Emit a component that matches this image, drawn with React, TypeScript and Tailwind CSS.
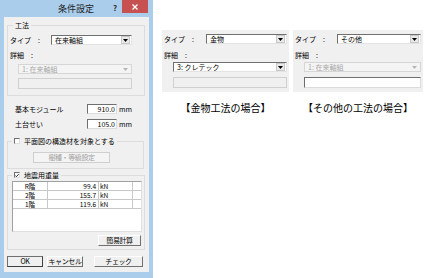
import React from "react";

const font = { fontFamily: '"Noto Sans CJK JP", "Noto Sans", sans-serif' };

function Arrow({ disabled }: { disabled?: boolean }) {
  return (
    <div
      className={`w-[9px] h-[8px] mr-[1px] flex items-center justify-center ${
        disabled ? "bg-[#f4f4f4]" : "bg-[#e9e9e9] border border-[#c8c8c8]"
      }`}
    >
      <svg width="5" height="3" viewBox="0 0 5 3">
        <path d="M0 0h5L2.5 3z" fill={disabled ? "#b5b5b5" : "#000"} />
      </svg>
    </div>
  );
}

function Select({
  value,
  width,
  disabled,
}: {
  value: string;
  width: string;
  disabled?: boolean;
}) {
  return (
    <div
      className={`${width} h-[10px] flex items-center justify-between border ${
        disabled
          ? "border-[#d6d6d6] bg-[#f4f4f4] text-[#a8a8a8]"
          : "border-t-[#6f6f6f] border-l-[#6f6f6f] border-r-[#e3e3e3] border-b-[#e3e3e3] bg-white text-black"
      }`}
    >
      <span className="pl-[3px] text-[7px] leading-none whitespace-nowrap">{value}</span>
      <Arrow disabled={disabled} />
    </div>
  );
}

function TextBox({ width, disabled }: { width: string; disabled?: boolean }) {
  return (
    <div
      className={`${width} h-[11px] border ${
        disabled
          ? "border-[#d0d0d0] bg-[#f0f0f0]"
          : "border-t-[#6f6f6f] border-l-[#6f6f6f] border-r-[#dcdcdc] border-b-[#dcdcdc] bg-white"
      }`}
    />
  );
}

function Button({
  label,
  width,
  disabled,
  isDefault,
}: {
  label: string;
  width: string;
  disabled?: boolean;
  isDefault?: boolean;
}) {
  return (
    <div
      className={`${width} h-[11px] flex items-center justify-center text-[7px] leading-none whitespace-nowrap tracking-[-0.4px] border ${
        disabled
          ? "border-[#cfcfcf] bg-[#f4f4f4] text-[#a0a0a0]"
          : isDefault
          ? "border-[#707070] border-r-[#404040] border-b-[#404040] bg-[#f0f0f0] text-black"
          : "border-[#ffffff] border-r-[#707070] border-b-[#707070] bg-[#f0f0f0] text-black"
      }`}
    >
      {label}
    </div>
  );
}

function Check({ checked }: { checked?: boolean }) {
  return (
    <span className="inline-flex w-[6px] h-[6px] border border-[#6f6f6f] border-r-[#e0e0e0] border-b-[#e0e0e0] bg-white mr-[4px] items-center justify-center">
      {checked && (
        <svg width="5" height="5" viewBox="0 0 5 5">
          <path d="M0.5 2.5l1.3 1.5L4.5 0.8" stroke="#000" strokeWidth="1" fill="none" />
        </svg>
      )}
    </span>
  );
}

const rows = [
  { floor: "R階", value: "99.4" },
  { floor: "2階", value: "155.7" },
  { floor: "1階", value: "119.6" },
];

function Dialog() {
  return (
    <div className="w-[153px] h-[278px] shrink-0 bg-[#aacdec] flex flex-col">
      {/* title bar */}
      <div className="h-[17px] flex items-start">
        <div className="flex-1 pt-[4px] pl-[58px] text-[9px] leading-[10px] text-[#1e1e1e]">
          条件設定
        </div>
        <div className="pt-[3px] mr-[5px] text-[8px] leading-[9px] font-bold text-[#333]">?</div>
        <div className="w-[26px] h-[13px] mr-[5px] bg-[#c75050] flex items-center justify-center">
          <svg width="6" height="6" viewBox="0 0 6 6">
            <path d="M0.5 0.5l5 5M5.5 0.5l-5 5" stroke="#fff" strokeWidth="1.3" />
          </svg>
        </div>
      </div>

      {/* client area */}
      <div className="ml-[4px] w-[145px] h-[255px] bg-[#f0f0f0] pl-[3px] pr-[4px] pt-[4px] text-[7px] leading-[8px] text-black">
        <fieldset className="border border-[#dcdcdc] pl-[2px] pb-[6px]">
          <legend className="ml-[3px] px-[2px] text-[7px] leading-[8px]">工法</legend>
          <div className="flex items-center mt-[6px]">
            <span className="w-[41px]">タイプ　:</span>
            <Select value="在来軸組" width="w-[81px]" />
          </div>
          <div className="mt-[6px]">詳細　:</div>
          <div className="ml-[8px] mt-[5px] flex flex-col gap-[4px]">
            <Select value="1: 在来軸組" width="w-[114px]" disabled />
            <TextBox width="w-[114px]" disabled />
          </div>
        </fieldset>

        <div className="mt-[8px] flex items-center h-[10px]">
          <span className="pl-[8px] w-[80px]">基本モジュール</span>
          <div className="w-[30px] h-[10px] bg-white border border-t-[#6f6f6f] border-l-[#6f6f6f] border-r-[#dcdcdc] border-b-[#dcdcdc] text-right pr-[1px] leading-[8px]">
            910.0
          </div>
          <span className="ml-[2px]">mm</span>
        </div>
        <div className="mt-[5px] flex items-center h-[10px]">
          <span className="pl-[8px] w-[80px]">土台せい</span>
          <div className="w-[30px] h-[10px] bg-white border border-t-[#6f6f6f] border-l-[#6f6f6f] border-r-[#dcdcdc] border-b-[#dcdcdc] text-right pr-[1px] leading-[8px]">
            105.0
          </div>
          <span className="ml-[2px]">mm</span>
        </div>

        <fieldset className="mt-[8px] border border-[#dcdcdc] w-[137px] pb-[5px]">
          <legend className="ml-[4px] px-[2px] flex items-center text-[7px] leading-[8px]">
            <Check />
            平面図の構造材を対象とする
          </legend>
          <div className="mt-[7px] ml-[25px]">
            <Button label="樹種・等級設定" width="w-[77px]" disabled />
          </div>
        </fieldset>

        <fieldset className="mt-[2px] border border-[#dcdcdc] pb-[3px]">
          <legend className="ml-[4px] px-[2px] flex items-center text-[7px] leading-[8px]">
            <Check checked />
            地震用重量
          </legend>
          <div className="ml-[4px] mt-[2px] w-[130px] h-[51px] bg-white border border-[#a0a0a0] border-r-[#e0e0e0] border-b-[#e0e0e0]">
            {rows.map((r) => (
              <div key={r.floor} className="flex h-[9px] border-b border-[#c8c8c8] text-[6.5px] leading-[8px]">
                <div className="w-[35px] border-r border-[#c8c8c8] text-center">{r.floor}</div>
                <div className="w-[51px] border-r border-[#c8c8c8] text-right pr-[2px]">{r.value}</div>
                <div className="w-[34px] border-r border-[#c8c8c8] pl-[1px]">kN</div>
                <div className="flex-1" />
              </div>
            ))}
          </div>
          <div className="flex justify-end mt-[3px] pr-[3px]">
            <Button label="簡易計算" width="w-[43px]" />
          </div>
        </fieldset>

        <div className="mt-[6px] flex">
          <Button label="OK" width="w-[36px]" isDefault />
          <div className="ml-[4px]">
            <Button label="キャンセル" width="w-[36px]" />
          </div>
          <div className="ml-[11px]">
            <Button label="チェック" width="w-[49px]" />
          </div>
        </div>
      </div>
    </div>
  );
}

function Variant({
  type,
  detail,
  detailDisabled,
  boxDisabled,
  caption,
  width,
}: {
  type: string;
  detail: string;
  detailDisabled?: boolean;
  boxDisabled?: boolean;
  caption: string;
  width: string;
}) {
  return (
    <div className={`${width} flex flex-col`}>
      <div className="h-[62px] bg-[#f0f0f0] pl-[2px] pr-[2px] pt-[4px] text-[7px] leading-[8px]">
        <div className="flex items-center">
          <span className="w-[42px]">タイプ　:</span>
          <Select value={type} width="flex-1" />
        </div>
        <div className="mt-[7px]">詳細　:</div>
        <div className="ml-[9px] mt-[3px] flex flex-col gap-[5px]">
          <Select value={detail} width="w-full" disabled={detailDisabled} />
          <TextBox width="w-full" disabled={boxDisabled} />
        </div>
      </div>
      <div className="mt-[11px] text-center text-[10px] leading-[10px] text-black whitespace-nowrap">
        {caption}
      </div>
    </div>
  );
}

export default function App() {
  return (
    <div className="w-[426px] h-[278px] bg-white flex overflow-hidden" style={font}>
      <Dialog />
      <div className="ml-[9px] mt-[30px] flex gap-[4px]">
        <Variant
          type="金物"
          detail="3: クレテック"
          boxDisabled
          caption="【金物工法の場合】"
          width="w-[127px]"
        />
        <Variant
          type="その他"
          detail="1: 在来軸組"
          detailDisabled
          caption="【その他の工法の場合】"
          width="w-[130px]"
        />
      </div>
    </div>
  );
}
